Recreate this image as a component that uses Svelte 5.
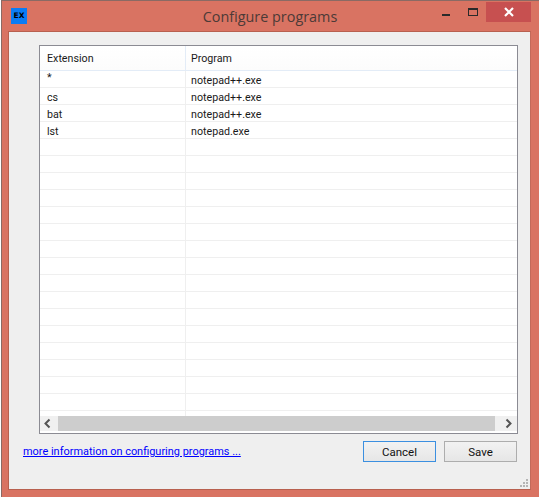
<script lang="ts">
	const programs = [
		{ ext: '*', program: 'notepad++.exe' },
		{ ext: 'cs', program: 'notepad++.exe' },
		{ ext: 'bat', program: 'notepad++.exe' },
		{ ext: 'lst', program: 'notepad.exe' }
	];
	// the grid is filled out with empty rows, the last one is cut off by the scrollbar
	const rows = [...programs, ...Array(17).fill({ ext: '', program: '' })];
</script>

<div class="window">
	<header class="titlebar">
		<div class="app-icon">EX</div>
		<h1>Configure programs</h1>
		<div class="controls">
			<span class="minimize"></span>
			<span class="maximize"></span>
			<span class="close">
				<svg width="12" height="10" viewBox="0 0 12 10">
					<path d="M2 1 L10 9 M10 1 L2 9" stroke="#fff" stroke-width="2.2" fill="none" />
				</svg>
			</span>
		</div>
	</header>

	<main class="client">
		<section class="grid">
			<div class="grid-head">
				<div class="col-ext">Extension</div>
				<div class="col-prog">Program</div>
			</div>
			<div class="grid-body">
				{#each rows as row}
					<div class="row">
						<div class="col-ext">{row.ext}</div>
						<div class="col-prog">{row.program}</div>
					</div>
				{/each}
			</div>
			<div class="scrollbar">
				<svg class="arrow" width="16" height="15" viewBox="0 0 16 15">
					<path d="M9.5 3.5 L5.5 7.5 L9.5 11.5" stroke="#555" stroke-width="2" fill="none" />
				</svg>
				<div class="thumb"></div>
				<svg class="arrow" width="16" height="15" viewBox="0 0 16 15">
					<path d="M6.5 3.5 L10.5 7.5 L6.5 11.5" stroke="#555" stroke-width="2" fill="none" />
				</svg>
			</div>
		</section>

		<footer class="actions">
			<a href="#info">more information on configuring programs ...</a>
			<div class="buttons">
				<button class="default">Cancel</button>
				<button>Save</button>
			</div>
		</footer>

		<svg class="grip" width="10" height="10" viewBox="0 0 10 10" fill="#b4b4b4">
			<rect x="6" y="0" width="2" height="2" />
			<rect x="3" y="3" width="2" height="2" />
			<rect x="6" y="3" width="2" height="2" />
			<rect x="0" y="6" width="2" height="2" />
			<rect x="3" y="6" width="2" height="2" />
			<rect x="6" y="6" width="2" height="2" />
		</svg>
	</main>
</div>

<style>
	:global(body) {
		background: #fff;
		font-family: Roboto, 'Liberation Sans', sans-serif;
	}

	.window {
		box-sizing: border-box;
		width: 538px;
		height: 497px;
		margin-left: 1px;
		display: flex;
		flex-direction: column;
		background: #d97362;
		border: 1px solid #8a6a64;
		border-right: none;
		border-bottom: none;
	}

	.titlebar {
		height: 30px;
		display: grid;
		grid-template-columns: 1fr auto 1fr;
		flex-shrink: 0;
	}

	.app-icon {
		width: 16px;
		height: 16px;
		margin: 7px 0 0 9px;
		background: #0a7cf5;
		color: #000;
		font: bold 7.5px/16px 'DejaVu Sans', sans-serif;
		text-align: center;
	}

	h1 {
		margin: 0;
		padding: 6px 1px 0 0;
		font: 400 14.4px 'Open Sans', sans-serif;
		color: #4c3a37;
	}

	.controls {
		display: flex;
		align-items: flex-start;
		justify-content: flex-end;
		margin-right: 8px;
	}

	.minimize {
		width: 8px;
		height: 2px;
		background: #2a2a2a;
		margin: 13px 18px 0 0;
	}

	.maximize {
		box-sizing: border-box;
		width: 10px;
		height: 8px;
		border: 1px solid #2a2a2a;
		border-top-width: 2px;
		margin: 7px 8px 0 0;
	}

	.close {
		width: 45px;
		height: 20px;
		background: #c75050;
		display: flex;
		align-items: center;
		justify-content: center;
		margin-top: 1px;
	}

	.client {
		flex: 1;
		position: relative;
		display: flex;
		flex-direction: column;
		background: #efefef;
		margin: 0 8px 7px 6px;
		border: 1px solid #b8604f;
		border-right-color: #c36a5a;
		padding: 13px 12px 0 30px;
		min-height: 0;
	}

	.grid {
		height: 389px;
		box-sizing: border-box;
		border: 1px solid #8b8b93;
		background: #fff;
		display: flex;
		flex-direction: column;
		overflow: hidden;
		font-size: 10.7px;
		color: #1a1a1a;
	}

	.grid-head {
		display: flex;
		height: 24px;
		flex-shrink: 0;
		border-bottom: 1px solid #e3ecf7;
		background: linear-gradient(#fff, #fcfcfc);
		line-height: 26px;
	}

	.grid-head .col-ext {
		border-right: 1px solid #e3ecf7;
	}

	.grid-body {
		flex: 1;
		overflow: hidden;
	}

	.row {
		display: flex;
		height: 16px;
		border-bottom: 1px solid #efefef;
		line-height: 19px;
	}

	.row .col-ext {
		border-right: 1px solid #efefef;
	}

	/* the asterisk sits high in the row */
	.row:first-child .col-ext {
		line-height: 13px;
	}

	.col-ext {
		box-sizing: border-box;
		width: 146px;
		padding-left: 7px;
		flex-shrink: 0;
	}

	.col-prog {
		padding-left: 5px;
	}

	.scrollbar {
		display: flex;
		align-items: center;
		height: 15px;
		margin-bottom: 2px;
		padding-right: 1px;
		flex-shrink: 0;
		background: #f0f0f0;
	}

	.thumb {
		flex: 1;
		height: 15px;
		background: #cdcdcd;
		margin: 0 5px 0 2px;
	}

	.actions {
		display: flex;
		justify-content: space-between;
		align-items: flex-start;
		margin: 7px 1px 0 -16px;
	}

	a {
		font-size: 10.95px;
		color: #0000ff;
		margin-top: 4px;
	}

	.buttons {
		display: flex;
		gap: 8px;
	}

	button {
		box-sizing: border-box;
		width: 73px;
		height: 21px;
		padding: 0;
		font: 11.5px Roboto, sans-serif;
		color: #111;
		background: linear-gradient(#f2f2f2, #e6e6e6);
		border: 1px solid #adadad;
	}

	button.default {
		border-color: #3b8fe0;
	}

	.grip {
		position: absolute;
		right: 0;
		bottom: 0;
	}
</style>
